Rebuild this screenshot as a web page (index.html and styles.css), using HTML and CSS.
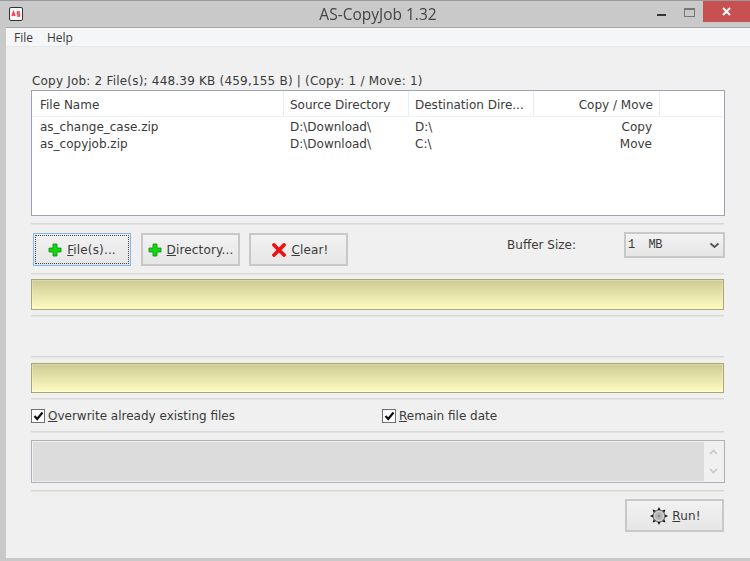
FILE: index.html
```html
<!DOCTYPE html>
<html lang="en">

<head>
    <meta charset="UTF-8">
    <meta name="viewport" content="width=device-width, initial-scale=1.0">
    <title>AS-CopyJob 1.32</title>
    <link rel="stylesheet" href="styles.css">
</head>

<body>
    <div class="window">
        <div class="titlebar">
            <div class="app-icon">
                <svg width="14" height="14" viewBox="0 0 14 14">
                    <rect x="0.5" y="0.5" width="13" height="13" rx="1.5" fill="#fff" stroke="#333"/>
                    <path d="M3 9 L4.5 5 L6 9 M3.5 8 H5.5" fill="none" stroke="#f5404e" stroke-width="1.5"/>
                    <path d="M11 5 H8.5 V7 H10.5 V9 H8" fill="none" stroke="#f5404e" stroke-width="1.5"/>
                </svg>
            </div>
            <div class="title">AS-CopyJob 1.32</div>
            <div class="controls">
                <div class="ctl-min"></div>
                <div class="ctl-max"></div>
                <div class="ctl-close">
                    <svg width="9" height="9" viewBox="0 0 9 9">
                        <path d="M1 1 L8 8 M8 1 L1 8" stroke="#fff" stroke-width="2"/>
                    </svg>
                </div>
            </div>
        </div>

        <div class="client">
            <div class="menu">
                <span class="menu-item">File</span>
                <span class="menu-item">Help</span>
            </div>

            <div class="content">
                <div class="caption">Copy Job: 2 File(s); 448.39 KB (459,155 B) | (Copy: 1 / Move: 1)</div>

                <div class="file-list">
                    <div class="list-head">
                        <div class="cell">File Name</div>
                        <div class="cell">Source Directory</div>
                        <div class="cell">Destination Dire...</div>
                        <div class="cell cell-right">Copy / Move</div>
                    </div>
                    <div class="list-row">
                        <div class="cell">as_change_case.zip</div>
                        <div class="cell">D:\Download\</div>
                        <div class="cell">D:\</div>
                        <div class="cell cell-right">Copy</div>
                    </div>
                    <div class="list-row">
                        <div class="cell">as_copyjob.zip</div>
                        <div class="cell">D:\Download\</div>
                        <div class="cell">C:\</div>
                        <div class="cell cell-right">Move</div>
                    </div>
                </div>

                <div class="rule rule-list"></div>

                <div class="toolbar">
                    <button class="btn btn-focus">
                        <svg width="14" height="14" viewBox="0 0 14 14">
                            <path d="M5 1 H9 V5 H13 V9 H9 V13 H5 V9 H1 V5 H5 Z" fill="#12d812" stroke="#0a8a0a" stroke-width="0.8"/>
                        </svg>
                        <span><u>F</u>ile(s)...</span>
                    </button>
                    <button class="btn">
                        <svg width="14" height="14" viewBox="0 0 14 14">
                            <path d="M5 1 H9 V5 H13 V9 H9 V13 H5 V9 H1 V5 H5 Z" fill="#12d812" stroke="#0a8a0a" stroke-width="0.8"/>
                        </svg>
                        <span><u>D</u>irectory...</span>
                    </button>
                    <button class="btn btn-clear">
                        <svg width="14" height="14" viewBox="0 0 14 14">
                            <path d="M2 2 L12 12 M12 2 L2 12" stroke="#f01010" stroke-width="3.6" stroke-linecap="square"/>
                        </svg>
                        <span><u>C</u>lear!</span>
                    </button>
                    <div class="buffer">
                        <span class="buffer-label">Buffer Size:</span>
                        <div class="combo">
                            <span class="combo-value">1  MB</span>
                            <svg width="11" height="7" viewBox="0 0 11 7">
                                <path d="M1.5 1.5 L5.5 5 L9.5 1.5" fill="none" stroke="#555" stroke-width="2"/>
                            </svg>
                        </div>
                    </div>
                </div>

                <div class="rule"></div>
                <div class="bar"></div>
                <div class="rule rule-after-bar"></div>
                <div class="spacer"></div>
                <div class="rule"></div>
                <div class="bar bar-two"></div>
                <div class="rule rule-after-bar"></div>

                <div class="options">
                    <label class="check check-first">
                        <span class="box">
                            <svg width="11" height="10" viewBox="0 0 11 10">
                                <path d="M1.5 5 L4.2 8 L9.5 1.5" fill="none" stroke="#111" stroke-width="2.2"/>
                            </svg>
                        </span>
                        <span><u>O</u>verwrite already existing files</span>
                    </label>
                    <label class="check">
                        <span class="box">
                            <svg width="11" height="10" viewBox="0 0 11 10">
                                <path d="M1.5 5 L4.2 8 L9.5 1.5" fill="none" stroke="#111" stroke-width="2.2"/>
                            </svg>
                        </span>
                        <span><u>R</u>emain file date</span>
                    </label>
                </div>

                <div class="rule"></div>

                <div class="memo">
                    <div class="memo-text"></div>
                    <div class="memo-scroll">
                        <svg width="9" height="6" viewBox="0 0 9 6">
                            <path d="M1 5 L4.5 1.5 L8 5" fill="none" stroke="#c8c8c8" stroke-width="1.6"/>
                        </svg>
                        <svg width="9" height="6" viewBox="0 0 9 6">
                            <path d="M1 1 L4.5 4.5 L8 1" fill="none" stroke="#c8c8c8" stroke-width="1.6"/>
                        </svg>
                    </div>
                </div>

                <div class="rule rule-memo"></div>

                <div class="run-row">
                    <button class="btn btn-run">
                        <svg width="18" height="18" viewBox="0 0 18 18">
                            <path d="M9 0 L10.5 3 H7.5 Z M9 18 L10.5 15 H7.5 Z M0 9 L3 7.5 V10.5 Z M18 9 L15 7.5 V10.5 Z M2.6 2.6 L5.8 3.6 L3.6 5.8 Z M15.4 2.6 L12.2 3.6 L14.4 5.8 Z M2.6 15.4 L5.8 14.4 L3.6 12.2 Z M15.4 15.4 L12.2 14.4 L14.4 12.2 Z" fill="#111"/>
                            <circle cx="9" cy="9" r="6" fill="#b4b4b4" stroke="#333" stroke-width="0.7"/>
                            <circle cx="9" cy="9" r="4.6" fill="none" stroke="#e4e4e4" stroke-width="0.8"/>
                            <circle cx="9" cy="9" r="1" fill="#777"/>
                        </svg>
                        <span><u>R</u>un!</span>
                    </button>
                </div>
            </div>
        </div>
    </div>
</body>

</html>
```

FILE: styles.css
```css
html, body {
    margin: 0;
    padding: 0;
    height: 100%;
    overflow: hidden;
}

body {
    background-color: #c9c9c9;
    font-family: "DejaVu Sans", sans-serif;
    font-size: 12px;
    color: #3a3a3a;
}

.window {
    height: 561px;
    display: flex;
    flex-direction: column;
    filter: blur(0.35px);
}

.titlebar {
    height: 26px;
    border-top: 1px solid #9a9a9a;
    display: grid;
    grid-template-columns: 1fr auto 1fr;
    flex: none;
}

.app-icon {
    padding: 6px 0 0 9px;
}

.title {
    font-family: "Open Sans", sans-serif;
    font-size: 15.5px;
    line-height: 27px;
    color: #444;
    padding-left: 6px;
}

.controls {
    display: flex;
    justify-content: flex-end;
    align-items: flex-start;
}

.ctl-min {
    width: 9px;
    height: 2px;
    background-color: #333;
    margin: 13px 18px 0 0;
}

.ctl-max {
    width: 9px;
    height: 6px;
    border: 1px solid #777;
    border-top-width: 2px;
    margin: 7px 8px 0 0;
}

.ctl-close {
    width: 47px;
    height: 21px;
    background-color: #c75050;
    display: flex;
    align-items: center;
    justify-content: center;
}

.client {
    flex: 1;
    margin: 0 0 3px 6px;
    background-color: #f0f0f0;
    border-top: 1px solid #a8a8a8;
    display: flex;
    flex-direction: column;
}

.menu {
    height: 18px;
    background-color: #f5f6f7;
    border-bottom: 1px solid #e8e8e8;
    padding-left: 8px;
    display: flex;
    gap: 14px;
    line-height: 19px;
    flex: none;
    font-family: "Open Sans", sans-serif;
    font-size: 12px;
}

.content {
    padding: 0 26px 0 25px;
}

.caption {
    margin-top: 26px;
    height: 17px;
    line-height: 16px;
    white-space: nowrap;
    letter-spacing: 0.2px;
    padding-left: 1px;
}

.file-list {
    height: 124px;
    margin-right: -1px;
    background-color: #fff;
    border: 1px solid #a0a0b0;
}

.list-head,
.list-row {
    display: grid;
    grid-template-columns: 252px 125px 125px 126px;
}

.list-head {
    height: 25px;
    line-height: 28px;
    border-bottom: 1px solid #eef2f6;
    margin-bottom: 2px;
}

.list-head .cell {
    border-right: 1px solid #e6eef7;
}

.list-row {
    height: 17px;
    line-height: 17px;
}

.cell {
    padding-left: 6px;
    white-space: nowrap;
    overflow: hidden;
}

.cell:first-child {
    padding-left: 8px;
}

.cell-right {
    text-align: right;
    padding: 0 6px 0 0;
}

.list-row .cell-right {
    padding-right: 8px;
}

.rule {
    height: 1px;
    background-color: #d8d8d8;
    border-bottom: 1px solid #e4e4e4;
}

.rule-list {
    margin-top: 7px;
}

.rule-after-bar {
    margin-top: 5px;
}

.rule-memo {
    margin-top: 7px;
}

.toolbar {
    height: 48px;
    display: flex;
    padding-left: 2px;
}

.btn {
    width: 99px;
    height: 33px;
    margin-top: 8px;
    margin-right: 9px;
    border: 2px solid #c8c8c8;
    background: linear-gradient(#f2f2f2, #e6e6e6);
    font-family: "DejaVu Sans", sans-serif;
    font-size: 12px;
    letter-spacing: 0.15px;
    color: #3a3a3a;
    display: flex;
    align-items: center;
    justify-content: center;
    gap: 5px;
    padding: 0;
}

.btn-focus {
    width: 98px;
    border: 1px solid #7db8f5;
    outline: 1px dotted #444;
    outline-offset: -3px;
    margin-right: 10px;
}

.btn-clear {
    padding-left: 4px;
}

.buffer {
    margin-left: auto;
    display: flex;
    margin-right: -1px;
}

.buffer-label {
    margin-top: 13px;
    margin-right: 48px;
}

.combo {
    box-sizing: border-box;
    width: 101px;
    height: 26px;
    margin-top: 7px;
    border: 2px solid #c8c8c8;
    background: linear-gradient(#f2f2f2, #e6e6e6);
    display: flex;
    align-items: center;
    justify-content: space-between;
    padding: 0 3px 0 2px;
}

.combo-value {
    font-family: "Liberation Mono", monospace;
    font-size: 12px;
    white-space: pre;
    letter-spacing: -0.4px;
}

.bar {
    height: 29px;
    margin-top: 4px;
    border: 1px solid #a9a874;
    background: linear-gradient(#cdcb92, #fffcc2);
    box-shadow: inset 0 0 0 1px rgba(255, 255, 255, 0.25);
}

.bar-two {
    margin-top: 5px;
    height: 28px;
}

.spacer {
    height: 39px;
}

.options {
    height: 31px;
    display: flex;
    align-items: center;
}

.check {
    display: flex;
    align-items: center;
    gap: 3px;
}

.check-first {
    width: 351px;
}

.box {
    width: 12px;
    height: 12px;
    border: 1px solid #707070;
    background-color: #fff;
    display: flex;
    align-items: center;
    justify-content: center;
}

.memo {
    height: 39px;
    margin-top: 7px;
    margin-right: -1px;
    border: 1px solid #b0b0bc;
    padding: 1px;
    display: flex;
    background-color: #f0f0f0;
}

.memo-text {
    flex: 1;
    background-color: #dcdcdc;
}

.memo-scroll {
    width: 19px;
    display: flex;
    flex-direction: column;
    align-items: center;
    justify-content: space-around;
}

.run-row {
    display: flex;
    justify-content: flex-end;
}

.btn-run {
    margin: 7px 0 0 0;
    gap: 4px;
    padding-left: 2px;
}
```
